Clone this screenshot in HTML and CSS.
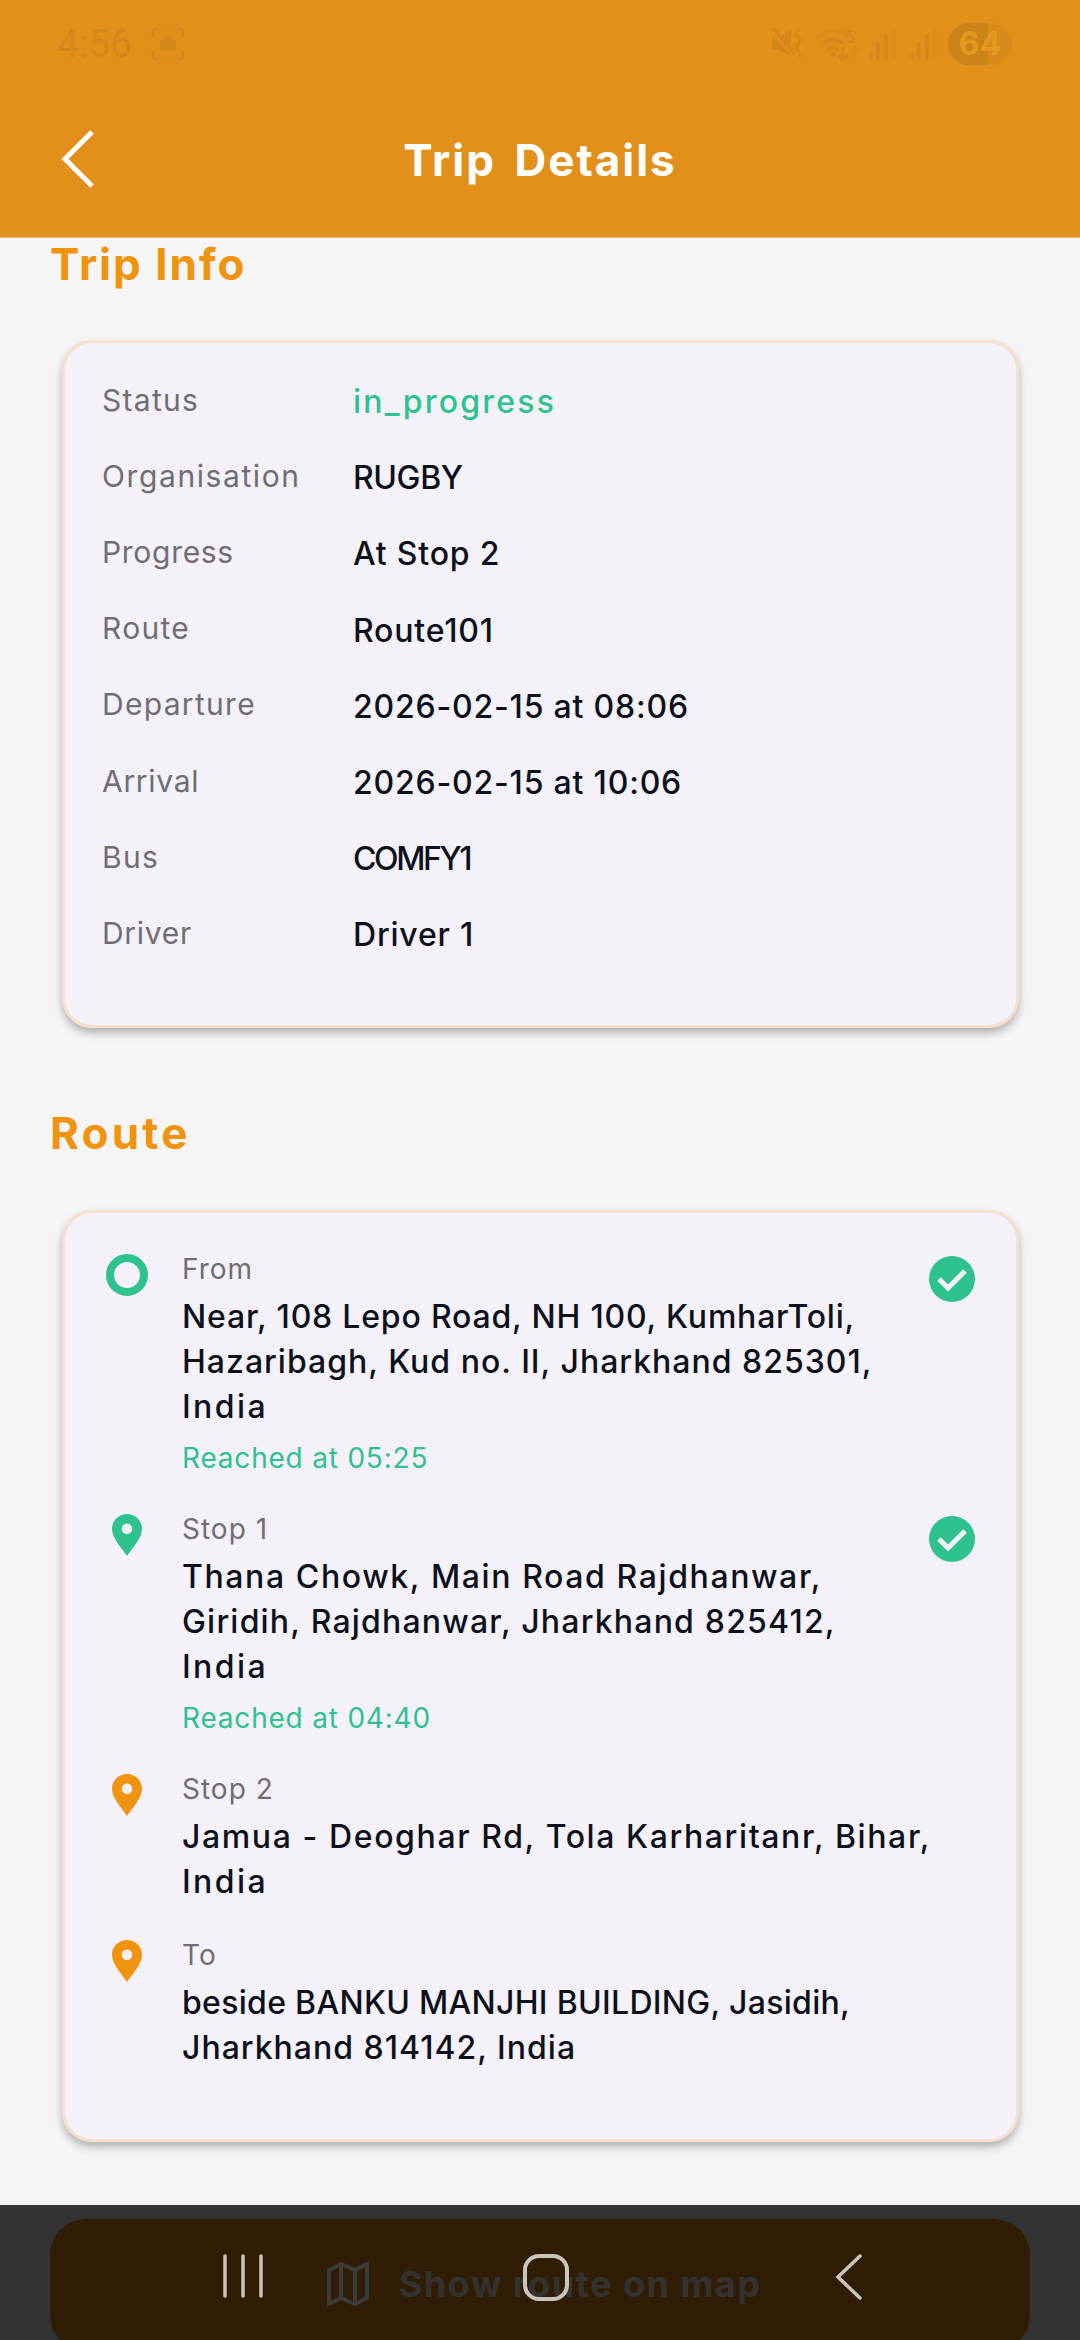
FILE: index.html
```html
<!DOCTYPE html>
<html lang="en">
<head>
    <meta charset="UTF-8">
    <title>Trip Details</title>
    <link rel="stylesheet" href="styles.css">
</head>
<body>
    <div class="page">
        <header class="top">
            <div class="status">
                <span class="time">4:56</span>
                <svg class="shot" width="34" height="34" viewBox="0 0 34 34" fill="none" stroke="#d5871a" stroke-width="3">
                    <path d="M2 10V5a3 3 0 0 1 3-3h5M24 2h5a3 3 0 0 1 3 3v5M32 24v5a3 3 0 0 1-3 3h-5M10 32H5a3 3 0 0 1-3-3v-5"/>
                    <rect x="9" y="13" width="16" height="10" rx="2" fill="#d5871a" stroke="none"/>
                    <circle cx="17" cy="13" r="4" fill="#d5871a" stroke="none"/>
                </svg>
                <div class="status-right">
                    <svg width="170" height="42" viewBox="0 0 170 42" fill="none">
                        <path d="M2 15h6l13-9v28l-13-8H2z" fill="#d5871a"/>
                        <path d="M2 6l22 27" stroke="#e3901a" stroke-width="5"/>
                        <path d="M3 5l21 26" stroke="#d5871a" stroke-width="3"/>
                        <path d="M28 7q-4 4 0 7t0 7 0 7 1 6" stroke="#d5871a" stroke-width="3"/>
                        <path d="M47 15q16-14 32 0" stroke="#dc8d1a" stroke-width="3.4"/>
                        <path d="M53 21q10-9 20 0M58 27q5-5 10 0" stroke="#d5871a" stroke-width="3.4"/>
                        <circle cx="63" cy="31" r="2.6" fill="#d5871a"/>
                        <text x="75" y="20" class="wifi-num">5</text>
                        <path d="M73 25v12m-5-5l5 5 5-5" stroke="#d5871a" stroke-width="2.6"/>
                        <path d="M85 35V24m-4 4l4-4 4 4" stroke="#dc8d1a" stroke-width="2.6"/>
                        <path d="M101 31v4M108 20v15M116 12v23" stroke="#d5871a" stroke-width="3.6" stroke-linecap="round"/>
                        <path d="M124 7v28" stroke="#dc8d1a" stroke-width="3.6" stroke-linecap="round"/>
                        <path d="M142 31v4M149 20v15M157 12v23" stroke="#d5871a" stroke-width="3.6" stroke-linecap="round"/>
                        <path d="M165 7v28" stroke="#dc8d1a" stroke-width="3.6" stroke-linecap="round"/>
                    </svg>
                    <div class="battery"><span class="battery-level"></span><span class="battery-num">64</span></div>
                </div>
            </div>
            <div class="appbar">
                <svg class="back" width="36" height="58" viewBox="0 0 36 58" fill="none" stroke="#fff" stroke-width="5">
                    <path d="M32 2L5 29l27 27" stroke-linejoin="miter"/>
                </svg>
                <h1 class="title">Trip Details</h1>
            </div>
        </header>

        <main class="content">
            <h2 class="heading">Trip Info</h2>
            <section class="card info-card">
                <div class="info-row"><span class="info-label">Status</span><span class="info-value green">in_progress</span></div>
                <div class="info-row"><span class="info-label long">Organisation</span><span class="info-value tight">RUGBY</span></div>
                <div class="info-row"><span class="info-label short">Progress</span><span class="info-value">At Stop 2</span></div>
                <div class="info-row"><span class="info-label">Route</span><span class="info-value">Route101</span></div>
                <div class="info-row"><span class="info-label">Departure</span><span class="info-value">2026-02-15 at 08:06</span></div>
                <div class="info-row"><span class="info-label short">Arrival</span><span class="info-value">2026-02-15 at 10:06</span></div>
                <div class="info-row"><span class="info-label">Bus</span><span class="info-value tighter">COMFY1</span></div>
                <div class="info-row"><span class="info-label short">Driver</span><span class="info-value">Driver 1</span></div>
            </section>

            <h2 class="heading route-heading">Route</h2>
            <section class="card route-card">
                <div class="stop">
                    <div class="stop-icon"><span class="ring"></span></div>
                    <div class="stop-text">
                        <div class="stop-label">From</div>
                        <div class="stop-addr">
                            <span class="ls-08">Near, 108 Lepo Road, NH 100, KumharToli,</span>
                            <span class="ls-10">Hazaribagh, Kud no. II, Jharkhand 825301,</span>
                            <span class="ls-24">India</span>
                        </div>
                        <div class="stop-time">Reached at 05:25</div>
                    </div>
                    <svg class="tick" width="46" height="46" viewBox="0 0 46 46">
                        <circle cx="23" cy="23" r="23" fill="#2ec28f"/>
                        <path d="M10 23l9 9 17-17" fill="none" stroke="#f5f1f9" stroke-width="5"/>
                    </svg>
                </div>
                <div class="stop">
                    <div class="stop-icon">
                        <svg width="30" height="42" viewBox="0 0 30 42"><path fill-rule="evenodd" d="M15 0c8.300 0 15 6.500 15 14.700C30 24 21 33 15 42 9 33 0 24 0 14.700 0 6.500 6.700 0 15 0zm0 9.500a5.300 5.300 0 1 0 0 10.600 5.300 5.300 0 0 0 0-10.600z" fill="#2ec28f"/></svg>
                    </div>
                    <div class="stop-text">
                        <div class="stop-label">Stop 1</div>
                        <div class="stop-addr">
                            <span class="ls-16">Thana Chowk, Main Road Rajdhanwar,</span>
                            <span class="ls-12">Giridih, Rajdhanwar, Jharkhand 825412,</span>
                            <span class="ls-24">India</span>
                        </div>
                        <div class="stop-time">Reached at 04:40</div>
                    </div>
                    <svg class="tick" width="46" height="46" viewBox="0 0 46 46">
                        <circle cx="23" cy="23" r="23" fill="#2ec28f"/>
                        <path d="M10 23l9 9 17-17" fill="none" stroke="#f5f1f9" stroke-width="5"/>
                    </svg>
                </div>
                <div class="stop">
                    <div class="stop-icon">
                        <svg width="30" height="42" viewBox="0 0 30 42"><path fill-rule="evenodd" d="M15 0c8.300 0 15 6.500 15 14.700C30 24 21 33 15 42 9 33 0 24 0 14.700 0 6.500 6.700 0 15 0zm0 9.500a5.300 5.300 0 1 0 0 10.600 5.300 5.300 0 0 0 0-10.600z" fill="#f0940f"/></svg>
                    </div>
                    <div class="stop-text">
                        <div class="stop-label">Stop 2</div>
                        <div class="stop-addr">
                            <span class="ls-16">Jamua - Deoghar Rd, Tola Karharitanr, Bihar,</span>
                            <span class="ls-24">India</span>
                        </div>
                    </div>
                </div>
                <div class="stop">
                    <div class="stop-icon">
                        <svg width="30" height="42" viewBox="0 0 30 42"><path fill-rule="evenodd" d="M15 0c8.300 0 15 6.500 15 14.700C30 24 21 33 15 42 9 33 0 24 0 14.700 0 6.500 6.700 0 15 0zm0 9.500a5.300 5.300 0 1 0 0 10.600 5.300 5.300 0 0 0 0-10.600z" fill="#f0940f"/></svg>
                    </div>
                    <div class="stop-text">
                        <div class="stop-label">To</div>
                        <div class="stop-addr">
                            <span class="ls-03">beside BANKU MANJHI BUILDING, Jasidih,</span>
                            <span class="ls-10">Jharkhand 814142, India</span>
                        </div>
                    </div>
                </div>
            </section>
        </main>

        <footer class="bottom">
            <div class="map-btn">
                <svg width="42" height="44" viewBox="0 0 42 44" fill="none" stroke="#3a3a38" stroke-width="4" stroke-linejoin="miter">
                    <path d="M2 8l12-6 14 6 12-6v34l-12 6-14-6-12 6z"/>
                    <path d="M14 2v34M28 8v34"/>
                </svg>
                <span class="map-text">Show route on map</span>
            </div>
            <svg class="navkeys" width="1080" height="50" viewBox="0 0 1080 50" fill="none" stroke="#c9c4bc">
                <path d="M225 3v40M243 3v40M261 3v40" stroke-width="3.500" stroke-linecap="round"/>
                <rect x="525" y="3" width="42" height="43" rx="14" stroke-width="4"/>
                <path d="M860 3l-22 21 22 21" stroke-width="3.500" stroke-linecap="round"/>
            </svg>
        </footer>
    </div>
</body>
</html>
```

FILE: styles.css
```css
* {
    box-sizing: border-box;
}
html, body {
    margin: 0;
    padding: 0;
}
body {
    font-family: Inter, "Noto Sans", sans-serif;
    background-color: #f5f5f5;
}
.page {
    width: 1080px;
    height: 2340px;
    display: flex;
    flex-direction: column;
    overflow: hidden;
}

/* header */
.top {
    height: 238px;
    flex-shrink: 0;
    background-color: #e3901a;
    border-bottom: 1px solid #f0bb6e;
}
.status {
    height: 88px;
    display: flex;
    align-items: center;
    padding: 0 68px 0 57px;
}
.time {
    font-family: Roboto, sans-serif;
    font-size: 39px;
    color: #d5871a;
}
.shot {
    margin-left: 19px;
}
.status-right {
    margin-left: auto;
    display: flex;
    align-items: center;
    gap: 8px;
}
.wifi-num {
    font-family: Roboto, sans-serif;
    font-size: 18px;
    font-weight: 500;
    fill: #d5871a;
}
.battery {
    position: relative;
    width: 64px;
    height: 42px;
    border-radius: 21px;
    overflow: hidden;
    background-color: #d98a1a;
    text-align: center;
}
.battery-level {
    position: absolute;
    left: 0;
    top: 0;
    width: 40px;
    height: 42px;
    background-color: #cc8418;
}
.battery-num {
    position: relative;
    font-size: 32px;
    font-weight: 700;
    line-height: 42px;
    color: #e3981f;
}
.appbar {
    position: relative;
    height: 149px;
    display: flex;
    align-items: center;
    justify-content: center;
}
.back {
    position: absolute;
    left: 60px;
    top: 42px;
}
.title {
    margin: 0 0 6px;
    font-size: 44px;
    font-weight: 700;
    letter-spacing: 2px;
    word-spacing: 6px;
    color: #fff;
}

/* content */
.content {
    flex: 1;
    padding: 0 62px 0 50px;
}
.heading {
    margin: -1px 0 0;
    font-size: 44px;
    line-height: 54px;
    font-weight: 700;
    letter-spacing: 2px;
    color: #f0940f;
}
.route-heading {
    margin-top: 78px;
    letter-spacing: 3.2px;
}
.card {
    margin: 49px 0 0 12px;
    width: 957px;
    background-color: #f5f1f9;
    border: 3px solid #f5e0d0;
    border-radius: 30px;
    box-shadow: 0 5px 8px rgba(0, 0, 0, 0.28);
}
.info-card {
    height: 688px;
    padding: 20.5px 37px 0;
}
.info-row {
    height: 76.2px;
    display: flex;
    align-items: center;
}
.info-label {
    width: 251px;
    flex-shrink: 0;
    font-size: 30px;
    letter-spacing: 1.3px;
    color: #6e6e73;
    padding-bottom: 4px;
}
.info-label.long {
    letter-spacing: 1.6px;
}
.info-label.short {
    letter-spacing: 0.7px;
}
.info-value {
    font-size: 32px;
    font-weight: 500;
    letter-spacing: 0.8px;
    color: #0d111c;
}
.info-value.green {
    color: #2ec28f;
    letter-spacing: 2.2px;
}
.info-value.tight {
    letter-spacing: -0.4px;
}
.info-value.tighter {
    letter-spacing: -2.4px;
}
.route-card {
    margin-top: 50px;
    height: 932px;
    padding: 34.5px 41px 0 39px;
}
.stop {
    display: flex;
    margin-bottom: 30px;
}
.stop-icon {
    width: 46px;
    flex-shrink: 0;
    display: flex;
    justify-content: center;
    padding-top: 6px;
}
.ring {
    width: 42px;
    height: 42px;
    border: 8px solid #2ec28f;
    border-radius: 50%;
}
.stop-text {
    flex: 1;
    padding-left: 32px;
}
.stop-label {
    font-size: 28px;
    line-height: 40px;
    letter-spacing: 1px;
    padding-top: 1px;
    margin-bottom: 5px;
    color: #6e6e73;
}
.stop-addr {
    font-size: 32px;
    line-height: 45px;
    font-weight: 500;
    color: #0d111c;
}
.stop-addr span {
    display: block;
}
.ls-03 { letter-spacing: 0.3px; }
.ls-08 { letter-spacing: 0.8px; }
.ls-10 { letter-spacing: 1px; }
.ls-12 { letter-spacing: 1.2px; }
.ls-16 { letter-spacing: 1.6px; }
.ls-24 { letter-spacing: 2.4px; }
.stop-time {
    margin-top: 9px;
    font-size: 28px;
    line-height: 40px;
    letter-spacing: 0.8px;
    color: #2ec28f;
}
.tick {
    flex-shrink: 0;
    margin-top: 8px;
}

/* bottom bar */
.bottom {
    position: relative;
    height: 135px;
    flex-shrink: 0;
    background-color: #333;
    padding: 14px 50px 0;
}
.map-btn {
    height: 132px;
    background-color: #2f1e05;
    border-radius: 36px;
    display: flex;
    align-items: flex-start;
    justify-content: center;
    gap: 30px;
    padding: 43px 0 0 8px;
}
.map-text {
    font-size: 36px;
    line-height: 44px;
    font-weight: 700;
    letter-spacing: 1.5px;
    color: #343230;
}
.navkeys {
    position: absolute;
    left: 0;
    top: 48px;
}
```
